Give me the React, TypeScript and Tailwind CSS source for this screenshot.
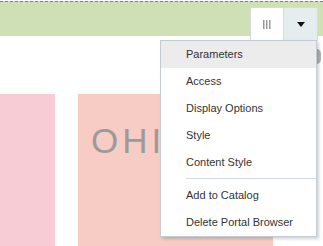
import React from 'react';

const items = ['Parameters', 'Access', 'Display Options', 'Style', 'Content Style'];
const extra = ['Add to Catalog', 'Delete Portal Browser'];

function BarsIcon() {
  return (
    <svg width="8" height="9" viewBox="0 0 8 9" className="block">
      <rect x="0" y="0" width="1.5" height="9" fill="#9a9a9a" />
      <rect x="3" y="0" width="1.5" height="9" fill="#9a9a9a" />
      <rect x="6" y="0" width="1.5" height="9" fill="#9a9a9a" />
    </svg>
  );
}

export default function App() {
  return (
    <div className="relative w-[323px] h-[246px] overflow-hidden bg-white font-['Liberation_Sans',Arial,sans-serif]">
      <div className="h-[35px] bg-[#cfdfb6] border-t border-dashed border-[#3d8fd8] mt-px" />

      <div className="flex mt-[58px] h-[152px]">
        <div className="w-[55px] bg-[#f7ccd5]" />
        <div className="ml-[23px] w-[195px] bg-[#f6ccc4] pt-[29px] pl-[13px]">
          <span className="block text-[35px] leading-none tracking-[4px] text-[#9b9b9b]">OHIO</span>
        </div>
      </div>

      {/* grey tab peeking out behind the menu */}
      <div className="absolute left-[312px] top-[49px] w-[9px] h-[15px] rounded-full bg-[#b5b5b5]" />

      <div className="absolute left-[250px] top-[7px] flex h-[34px]">
        <div className="w-[34px] h-full bg-white border border-[#d3dae0] flex items-center justify-center">
          <BarsIcon />
        </div>
        <div className="w-[34px] h-full bg-[#e6edef] border border-l-0 border-[#d3dae0] flex items-center justify-center">
          <svg width="8" height="5" viewBox="0 0 8 5" className="block">
            <path d="M0 0 L8 0 L4 5 Z" fill="#111" />
          </svg>
        </div>
      </div>

      <div className="absolute left-[160px] top-[40px] w-[157px] bg-white border border-[#c3ccd5] shadow-[2px_2px_3px_rgba(0,0,0,0.18)] text-[11px] text-[#333]">
        {items.map((label, i) => (
          <div
            key={label}
            className={`h-[27px] flex items-center pl-[25px] ${i === 0 ? 'bg-[#ececec]' : ''}`}
          >
            {label}
          </div>
        ))}
        <div className="pt-[2px] pb-[3px] pl-[25px]">
          <div className="h-px bg-[#d5dce3]" />
        </div>
        {extra.map((label) => (
          <div key={label} className="h-[27px] flex items-center pl-[25px]">
            {label}
          </div>
        ))}
      </div>
    </div>
  );
}
